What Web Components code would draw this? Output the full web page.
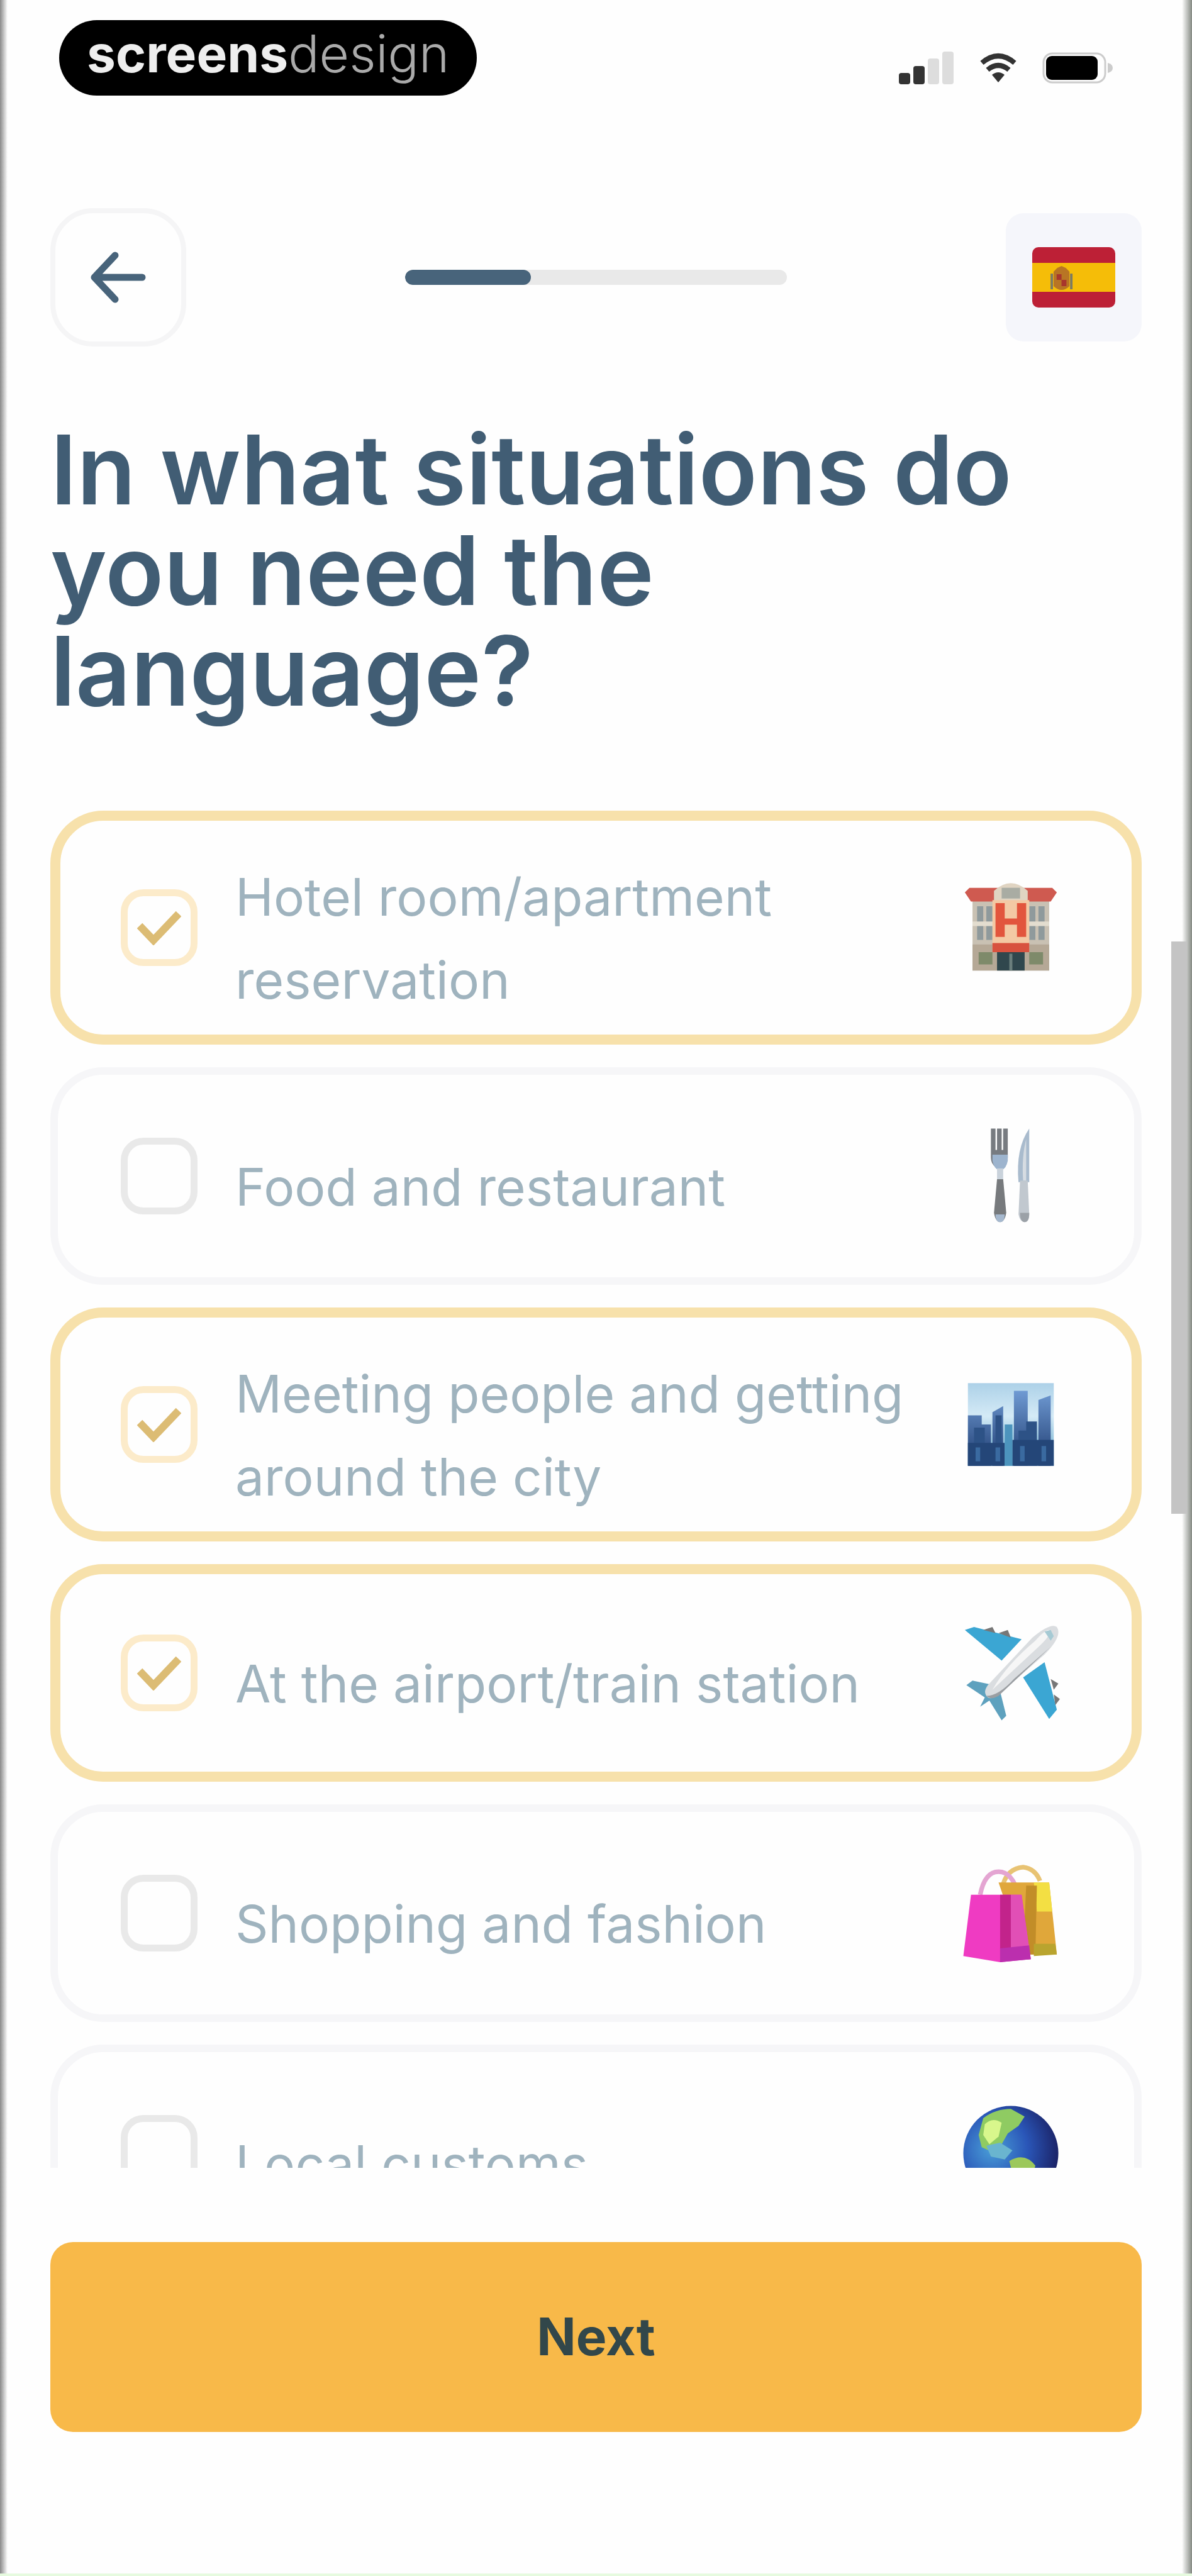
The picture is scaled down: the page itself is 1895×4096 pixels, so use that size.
<!DOCTYPE html>
<html lang="en">
<head>
<meta charset="utf-8">
<meta name="viewport" content="width=device-width, initial-scale=1">
<title>Language situations</title>
<style>
    body {
        margin: 0;
        background: #fefefe;
        font-family: Inter, "Open Sans", sans-serif;
    }
</style>
</head>
<body>
<quiz-screen>
    <status-bar slot="status"></status-bar>
    <quiz-nav slot="nav" value="33"></quiz-nav>
    <span slot="title">In what situations do you need the language?</span>
    <quiz-option icon="hotel" checked>Hotel room/apartment reservation</quiz-option>
    <quiz-option icon="food">Food and restaurant</quiz-option>
    <quiz-option icon="city" checked>Meeting people and getting around the city</quiz-option>
    <quiz-option icon="plane" checked>At the airport/train station</quiz-option>
    <quiz-option icon="bags">Shopping and fashion</quiz-option>
    <quiz-option icon="globe">Local customs</quiz-option>
    <next-button slot="footer">Next</next-button>
</quiz-screen>

<script>
const ICONS = {
    hotel: `
        <path fill="#c9c1b3" d="M7 14h50v46H7z"/>
        <path fill="#b5a896" d="M7 43h50v17H7z"/>
        <path fill="#8f9a9c" d="M10 18h4v22h-4zM16 18h4v22h-4zM44 18h4v22h-4zM50 18h4v22h-4z"/>
        <path fill="#e3ddcf" d="M7 28h50v3H7z"/>
        <path fill="#cf5a50" d="M2 9l3-3h54l3 3-4 6H6z"/>
        <path fill="#e0d4c2" d="M21 8q11-10 22 0v8H21z"/>
        <path fill="#a9aca3" d="M26 6h12v7H26z"/>
        <path fill="#f3c9a4" d="M20 14h24v34H20z"/>
        <path fill="#e2553d" d="M22 16h6v10h8V16h6v22h-6v-8h-8v8h-6z"/>
        <path fill="#d8523f" d="M20 42h24v6H20z"/>
        <path fill="#30474d" d="M23 48h18v12H23z"/>
        <path fill="#6b7f7d" d="M31 49h2v11h-2z"/>
        <path fill="#7e8a6a" d="M11 48h9v8h-9zM44 48h9v8h-9z"/>`,
    food: `
        <path fill="#777b80" d="M19 1h3v14h1V1h3v14h1V1h3v19q0 4-3 6h-5q-3-2-3-6z"/>
        <path fill="#9db4ce" d="M20 18h10v4q-1 5-4 6h-2q-3-1-4-6z"/>
        <path fill="#c9d2db" d="M23 27h4v9h-4z"/>
        <path fill="#777a7d" d="M23 34h4l2 22q-1 6-4 6t-4-6z"/>
        <path fill="#a5b8ce" d="M22 57h6q0 5-3 5t-3-5z"/>
        <path fill="#a9bbcd" d="M44 1v35h-7q-2-22 7-35z"/>
        <path fill="#d6dce2" d="M42 8v27h-2q-1-16 2-27z"/>
        <path fill="#c1c8cf" d="M38 35h5l1 22q0 5-3 5t-4-5z"/>
        <path fill="#9ba1a7" d="M38 56h6q0 6-3 6t-3-6z"/>`,
    city: `
        <defs><linearGradient id="sky" x2="0" y2="1"><stop stop-color="#add1e8"/><stop offset=".4" stop-color="#d4eaf6"/><stop offset="1" stop-color="#559fc5"/></linearGradient>
        <linearGradient id="tower" x2="0" y2="1"><stop stop-color="#6f9ad3"/><stop offset="1" stop-color="#1d3a6e"/></linearGradient></defs>
        <path fill="url(#sky)" d="M4 5h56v54H4z"/>
        <path fill="url(#tower)" d="M4 26h9v33H4zM13 32h6v27h-6zM20 24l7-4v39h-7zM34 10h9v49h-9zM50 16l8-3v46h-8z"/>
        <path fill="#2d5286" d="M8 34h7v25H8zM22 26h4v33h-4zM42 30h7v29h-7zM37 36h6v23h-6z"/>
        <path fill="#244678" d="M4 44h24v15H4zM33 42h27v17H33z"/>
        <path fill="#3a6aa0" d="M9 47h3v9H9zM22 47h3v9h-3zM38 46h3v10h-3zM52 46h3v10h-3z"/>
        <path fill="#4c94bd" d="M28 32h5v27h-5z"/>`,
    plane: `
        <path fill="#3ba6d3" d="M2 4l6-2 31 8-13 14zM54 25l8 31-5 6-17-27z"/>
        <path fill="#777" d="M14 4l6-2 2 4zM24 6l6-2 2 5zM58 36l5 3-3 4zM60 46l4 3-3 4z"/>
        <path fill="#5ea1be" d="M3 40l4-3 14 3 4 4 4 16-3 3-8-13-6 4 3-6z"/>
        <path fill="#dadde0" d="M62 2q4 6-8 18L23 47q-5 3-7 0t1-7L46 9Q58-1 62 2z"/>
        <path fill="#f6f6f6" d="M57 4q2 3-8 12L20 43q9-16 28-32 6-7 9-7z"/>
        <path fill="#9a9ea2" d="M58 15L24 47q-5 3-8 0 8 0 18-11z"/>
        <path fill="#a6cad4" d="M54 5l4-1 2 4-2 3z"/>`,
    bags: `
        <path fill="none" stroke="#e8c373" stroke-width="3" d="M27 13q3-10 13-11 8 1 11 9"/>
        <path fill="none" stroke="#e4a5d2" stroke-width="3" d="M12 20Q15 5 24 5q9 0 13 15"/>
        <path fill="#e0a73a" d="M24 12h33l5 47H40z"/>
        <path fill="#f3df43" d="M47 12h10l2 19H49z"/>
        <path fill="#c28d28" d="M42 14h7l-1 45h-8z"/>
        <path fill="#b9a42f" d="M47 52h14l1 7-15 1z"/>
        <path fill="#ef3bc2" d="M6 20h33l6 42-20 2-24-4z"/>
        <path fill="#c2238b" d="M25 20h7v43h-7z"/>
        <path fill="#e14fb6" d="M32 20h7l6 42-13 1z"/>
        <path fill="#bb2fae" d="M25 55l19-2 1 9-20 2z"/>`,
    globe: `
        <defs><radialGradient id="sea" cx=".3" cy=".45" r=".75"><stop stop-color="#4a9fd8"/><stop offset=".5" stop-color="#2a56b8"/><stop offset="1" stop-color="#191c5c"/></radialGradient></defs>
        <circle cx="32" cy="32" r="31" fill="url(#sea)"/>
        <path fill="#8fcb62" d="M14 9Q22 3 32 3l9 5-4 6-7 5-4 7-4 6-9-4-2-8z"/>
        <path fill="#d8f78c" d="M15 13q5-5 11-1l-2 9-6 5-4-6z"/>
        <path fill="#6ab5cf" d="M16 27l9-2 8 5-5 6-9-2z"/>
        <path fill="#9cc85b" d="M31 37q10-6 17 3l-4 14-8 3z"/>`
};

class StatusBar extends HTMLElement {
    constructor() {
        super();
        this.attachShadow({mode: 'open'});
        this.shadowRoot.innerHTML = `
            <style>
                :host {
                    display: flex;
                    justify-content: space-between;
                    align-items: center;
                    padding: 32px 124px 0 94px;
                }
                .brand {
                    box-sizing: border-box;
                    height: 120px;
                    padding: 0 44px;
                    border-radius: 60px;
                    background: #000;
                    color: #aaa;
                    font-size: 82px;
                    line-height: 108px;
                    font-weight: 300;
                }
                b {
                    color: #eee;
                    font-weight: 700;
                }
                .icons {
                    display: flex;
                    align-items: center;
                    gap: 40px;
                    padding-top: 32px;
                }
                svg {
                    display: block;
                }
            </style>
            <div class="brand"><b>screens</b>design</div>
            <div class="icons">
                <svg width="88" height="56" viewBox="0 0 88 56" role="img" aria-label="Signal">
                    <rect x="0" y="36" width="18" height="18" rx="4" fill="#333"/>
                    <rect x="23" y="25" width="18" height="29" rx="4" fill="#333"/>
                    <rect x="46" y="13" width="18" height="41" rx="4" fill="#ddd"/>
                    <rect x="69" y="2" width="18" height="52" rx="4" fill="#ddd"/>
                </svg>
                <svg width="60" height="48" viewBox="0 0 60 48" fill="none" stroke="#333" role="img" aria-label="Wi-Fi">
                    <path stroke-width="8" d="M4 16q26-22 52 0M13 27q17-14 34 0"/>
                    <path fill="#333" stroke="none" d="M20 35q10-8 20 0L30 47z"/>
                </svg>
                <svg width="114" height="50" viewBox="0 0 114 50" role="img" aria-label="Battery">
                    <rect x="2" y="2" width="98" height="46" rx="14" fill="none" stroke="#ccc" stroke-width="3"/>
                    <rect x="6" y="6" width="82" height="38" rx="9"/>
                    <path fill="#ccc" d="M104 17q8 2 8 8t-8 8z"/>
                </svg>
            </div>
        `;
    }
}

class QuizNav extends HTMLElement {
    constructor() {
        super();
        this.attachShadow({mode: 'open'});
        this.shadowRoot.innerHTML = `
            <style>
                :host {
                    display: grid;
                    grid-template-columns: 1fr auto 1fr;
                    align-items: center;
                }
                button {
                    display: grid;
                    place-items: center;
                    padding: 0;
                    cursor: pointer;
                }
                .back {
                    width: 216px;
                    height: 220px;
                    border: 8px solid #f5f5f6;
                    border-radius: 68px;
                    background: #fefefe;
                }
                .flag {
                    justify-self: end;
                    width: 216px;
                    height: 204px;
                    border: 0;
                    border-radius: 28px;
                    background: #f5f6fb;
                }
                .track {
                    width: 32vw;
                    height: 24px;
                    border-radius: 12px;
                    background: #e9e9e9;
                    overflow: hidden;
                }
                .fill {
                    height: 24px;
                    border-radius: 12px;
                    background: #48647b;
                }
            </style>
            <button class="back" type="button" aria-label="Back">
                <svg width="92" height="84" viewBox="0 0 92 84" fill="none" stroke="#48647b" stroke-width="11" stroke-linecap="round" stroke-linejoin="round">
                    <path d="M84 42H9M41 7L8 42l33 35"/>
                </svg>
            </button>
            <div class="track" role="progressbar" aria-label="Progress"><div class="fill"></div></div>
            <button class="flag" type="button" aria-label="Spanish">
                <svg width="132" height="96" viewBox="0 0 136 96" preserveAspectRatio="none">
                    <rect width="136" height="96" rx="10" fill="#bd2036"/>
                    <path fill="#f5bd08" d="M0 25h136v46H0z"/>
                    <path fill="#b87524" d="M35 39l6-6 7-3 7 3 6 6v23q-13 12-26 0z"/>
                    <path fill="#a8362c" d="M40 43h8v9h-8zM48 52h8v10h-8z"/>
                    <path fill="#7c7b62" d="M30 42h4v25h-4zM62 42h4v25h-4z"/>
                </svg>
            </button>
        `;
    }

    connectedCallback() {
        const value = this.getAttribute('value') || 0;
        this.shadowRoot.querySelector('.fill').style.width = value + '%';
        this.shadowRoot.querySelector('.track').setAttribute('aria-valuenow', value);
    }
}

class QuizOption extends HTMLElement {
    constructor() {
        super();
        this.attachShadow({mode: 'open'});
        this.shadowRoot.innerHTML = `
            <style>
                :host {
                    display: block;
                    flex: none;
                }
                label {
                    box-sizing: border-box;
                    display: flex;
                    align-items: center;
                    gap: 60px;
                    min-height: 346px;
                    padding: 20px 118px 20px 100px;
                    border: 12px solid #f6f6f8;
                    border-radius: 84px;
                    background: #fefefe;
                    cursor: pointer;
                }
                :host([checked]) label {
                    padding: 20px 114px 20px 96px;
                    border: 16px solid #f7e1ab;
                }
                .box {
                    display: grid;
                    flex: none;
                }
                .box > * {
                    grid-area: 1 / 1;
                }
                input {
                    appearance: none;
                    box-sizing: border-box;
                    width: 122px;
                    height: 122px;
                    margin: 0;
                    border: 11px solid #e9e9e9;
                    border-radius: 36px;
                }
                input:checked {
                    border-color: #fcebca;
                }
                .tick {
                    place-self: center;
                    visibility: hidden;
                }
                input:checked + .tick {
                    visibility: visible;
                }
                .text {
                    flex: 1;
                    padding-top: 36px;
                    color: #9fb3be;
                    font-size: 82px;
                    line-height: 132px;
                }
                .icon {
                    flex: none;
                    width: 156px;
                    height: 156px;
                }
            </style>
            <label>
                <span class="box">
                    <input type="checkbox">
                    <svg class="tick" width="70" height="56" viewBox="0 0 70 56" fill="none" stroke="#dcbc74" stroke-width="12">
                        <path d="M4 25l22 23L66 6"/>
                    </svg>
                </span>
                <span class="text"><slot></slot></span>
                <svg class="icon" viewBox="0 0 64 64" aria-hidden="true"></svg>
            </label>
        `;
    }

    connectedCallback() {
        const input = this.shadowRoot.querySelector('input');
        input.checked = this.hasAttribute('checked');
        input.addEventListener('change', () => this.toggleAttribute('checked', input.checked));
        this.shadowRoot.querySelector('.icon').innerHTML = ICONS[this.getAttribute('icon')] || '';
    }
}

class NextButton extends HTMLElement {
    constructor() {
        super();
        this.attachShadow({mode: 'open'});
        this.shadowRoot.innerHTML = `
            <style>
                :host {
                    display: block;
                }
                button {
                    width: 100%;
                    padding: 87px 0;
                    border: 0;
                    border-radius: 36px;
                    background: #f8b949;
                    color: #32474a;
                    font-family: inherit;
                    font-size: 82px;
                    line-height: 128px;
                    font-weight: 700;
                    cursor: pointer;
                }
            </style>
            <button type="button"><slot></slot></button>
        `;
    }
}

class QuizScreen extends HTMLElement {
    constructor() {
        super();
        this.attachShadow({mode: 'open'});
        this.shadowRoot.innerHTML = `
            <style>
                :host {
                    position: relative;
                    display: flex;
                    flex-direction: column;
                    box-sizing: border-box;
                    height: 100vh;
                    border-bottom: 4px solid #e6fbdf;
                    background: linear-gradient(90deg, #8a8a8a, #fefefe 12px, #fefefe calc(100% - 16px), #858a83);
                }
                .nav {
                    padding: 179px 80px 0;
                }
                h1 {
                    margin: 0;
                    padding: 116px 80px 0 80px;
                    color: #415d74;
                    font-size: 153px;
                    line-height: 160px;
                    font-weight: 600;
                }
                .options {
                    flex: 1 1 0;
                    display: flex;
                    flex-direction: column;
                    gap: 36px;
                    min-height: 0;
                    margin-top: 142px;
                    padding: 0 80px;
                    overflow-y: auto;
                    scrollbar-width: none;
                }
                .footer {
                    padding: 118px 80px 225px;
                }
                .thumb {
                    position: absolute;
                    top: 1497px;
                    right: 8px;
                    width: 25px;
                    height: 910px;
                    background: #c4c4c4;
                }
            </style>
            <slot name="status"></slot>
            <div class="nav"><slot name="nav"></slot></div>
            <h1><slot name="title"></slot></h1>
            <div class="options"><slot></slot></div>
            <div class="footer"><slot name="footer"></slot></div>
            <div class="thumb"></div>
        `;
    }
}

customElements.define('status-bar', StatusBar);
customElements.define('quiz-nav', QuizNav);
customElements.define('quiz-option', QuizOption);
customElements.define('next-button', NextButton);
customElements.define('quiz-screen', QuizScreen);
</script>
</body>
</html>
